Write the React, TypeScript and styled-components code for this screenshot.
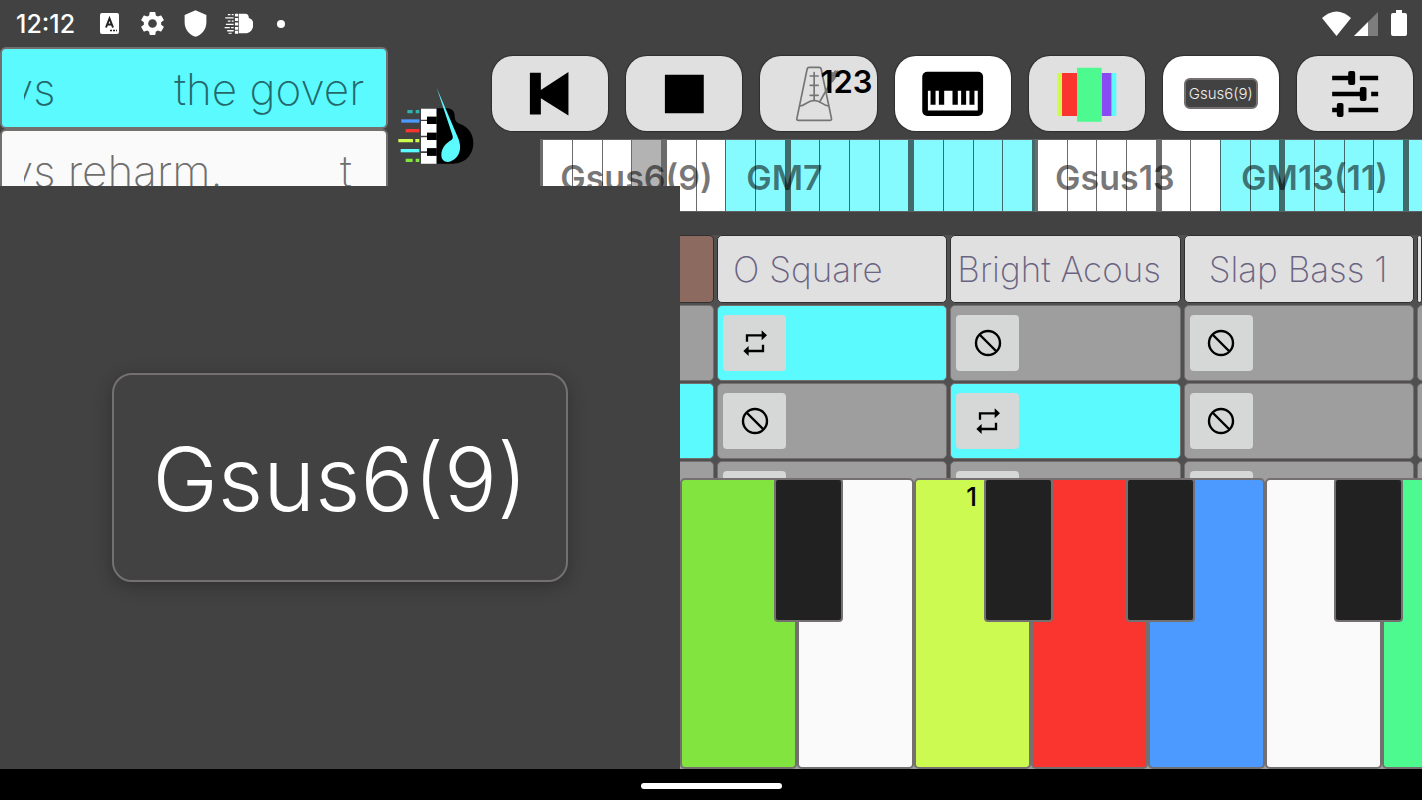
import React from "react";
import styled, { createGlobalStyle } from "styled-components";
import { MdSettings, MdShield } from "react-icons/md";

const bg = "#424242";
const edge = "#757070";
const cyan = "#5afaff";

const Global = createGlobalStyle`
  *, *::before, *::after { box-sizing: border-box; }
  body { margin: 0; background: ${bg}; }
  button { font: inherit; color: inherit; padding: 0; margin: 0; cursor: pointer; }
`;

const Page = styled.div`
  min-height: 100vh;
  display: flex;
  flex-direction: column;
  overflow: hidden;
  background: ${bg};
  font-family: Inter, "Liberation Sans", sans-serif;
`;

const StatusBar = styled.header`
  height: 47px;
  display: flex;
  align-items: center;
  justify-content: space-between;
  padding: 0 15px 0 16px;
  color: #fff;
`;

const StatusGroup = styled.div<{ $gap: number }>`
  display: flex;
  align-items: center;
  gap: ${(p) => p.$gap}px;
  svg { display: block; }
`;

const Clock = styled.time`
  flex: 0 0 65px;
  font-size: 25px;
  line-height: 28px;
  font-weight: 500;
`;

const Stage = styled.main`
  position: relative;
  flex: 1;
  display: flex;
  flex-direction: column;
`;

const Top = styled.div`
  height: 165px;
  display: flex;
  align-items: flex-start;
`;

const SongList = styled.div`
  flex: 0 0 27.3%;
  height: 139px;
  overflow: hidden;
`;

const Song = styled.button<{ $active?: boolean }>`
  display: flex;
  width: 100%;
  height: 82px;
  padding: 0 22px;
  border: 2px solid ${edge};
  border-radius: 6px;
  background: ${(p) => (p.$active ? cyan : "#fafafa")};
  color: ${(p) => (p.$active ? "#24686a" : "#6e6e6e")};
  font-size: 44px;
  font-weight: 200;
  line-height: 80px;
  text-align: left;
`;

const Marquee = styled.span`
  flex: 1;
  display: flex;
  justify-content: space-between;
  overflow: hidden;
  white-space: pre;
`;

const Leaving = styled.span`
  margin-left: -15px;
`;

const LogoBox = styled.div`
  flex: 0 0 104px;
  padding: 39px 0 0 9px;
  svg { display: block; }
`;

const TopRight = styled.div`
  flex: 1;
  min-width: 0;
`;

const Toolbar = styled.div`
  display: grid;
  grid-template-columns: repeat(7, 1fr);
  gap: 18px;
  height: 92px;
  padding: 9px 9px 8px 0;
`;

const Tool = styled.button<{ $on?: boolean }>`
  position: relative;
  display: flex;
  align-items: center;
  justify-content: center;
  border: 0;
  border-radius: 21px;
  background: ${(p) => (p.$on ? "#fff" : "#e0e0e0")};
  box-shadow: 0 0 1px 1px rgba(0, 0, 0, 0.3);
  svg { display: block; width: 116px; height: 75px; flex: none; }
`;

const Count = styled.span`
  position: absolute;
  top: 9px;
  right: 4px;
  font-size: 31px;
  line-height: 34px;
  font-weight: 600;
  color: #000;
`;

const MiniChord = styled.span`
  padding: 0 3px;
  border: 2px solid ${edge};
  border-radius: 6px;
  background: ${bg};
  color: #eee;
  font-size: 15px;
  line-height: 27px;
  font-weight: 300;
`;

const Timeline = styled.div`
  display: flex;
  height: 73px;
  margin-left: 48px;
  overflow: hidden;
`;

const Measure = styled.div`
  flex: 0 0 14.03%;
  display: flex;
`;

const Beat = styled.div<{ $tone: "white" | "cyan" | "grey"; $first: boolean; $last: boolean }>`
  position: relative;
  flex: 1;
  border-top: 1px solid #606060;
  border-bottom: 1px solid #606060;
  border-left: ${(p) => (p.$first ? "3px" : "1px")} solid ${(p) => (p.$tone === "cyan" ? "#416a6b" : "#6b6b6b")};
  border-right: ${(p) => (p.$last ? "3px" : "0")} solid ${(p) => (p.$tone === "cyan" ? "#416a6b" : "#6b6b6b")};
  background: ${(p) => ({ white: "#fff", cyan: "#86fbff", grey: "#b3b3b3" })[p.$tone]};
`;

const ChordName = styled.span<{ $inset: number }>`
  position: absolute;
  z-index: 1;
  left: ${(p) => p.$inset}px;
  top: 18px;
  font-size: 34px;
  line-height: 40px;
  font-weight: 600;
  white-space: nowrap;
  color: rgba(0, 0, 0, 0.54);
`;

const Right = styled.section`
  flex: 1;
  margin-left: 47.82%;
  display: flex;
  flex-direction: column;
`;

const Tracks = styled.div`
  height: 266px;
  padding-top: 23px;
  overflow: hidden;
`;

const TrackGrid = styled.div`
  display: grid;
  grid-template-columns: 34px repeat(3, 1fr) 5px;
  grid-auto-rows: 76px;
  grid-template-rows: 68px;
  gap: 2px 3px;
  background: #505050;
`;

const TrackName = styled.button<{ $inset?: number; $tone?: string }>`
  overflow: hidden;
  border: 1px solid #303030;
  border-left-width: ${(p) => (p.$tone ? 0 : 1)}px;
  border-radius: ${(p) => (p.$tone ? "0 5px 5px 0" : "5px")};
  padding-left: ${(p) => p.$inset ?? 0}px;
  background: ${(p) => p.$tone ?? "#e0e0e0"};
  color: #6a6482;
  font-size: 35px;
  line-height: 66px;
  font-weight: 200;
  text-align: left;
  white-space: nowrap;
`;

const Cell = styled.div<{ $on?: boolean; $cut?: boolean }>`
  overflow: hidden;
  border: 1px solid ${edge};
  border-left-width: ${(p) => (p.$cut ? 0 : 1)}px;
  border-radius: ${(p) => (p.$cut ? "0 5px 5px 0" : "5px")};
  padding: 9px 5px;
  background: ${(p) => (p.$on ? cyan : "#9e9e9e")};
`;

const Mode = styled.button`
  display: flex;
  align-items: center;
  justify-content: center;
  width: 63px;
  height: 56px;
  border: 0;
  border-radius: 4px;
  background: #d6d8d7;
  color: #000;
`;

const Keyboard = styled.div`
  flex: 1;
  min-height: 291px;
  display: flex;
  overflow: hidden;
  background: #9e9e9e;
`;

const KeySlot = styled.div`
  position: relative;
  flex: 0 0 15.77%;
  display: flex;
`;

const WhiteKey = styled.button<{ $tone: string }>`
  flex: 1;
  display: flex;
  justify-content: flex-end;
  padding: 3px 52px 0 0;
  border: 2px solid ${edge};
  border-radius: 5px;
  background: ${(p) => p.$tone};
  color: #000;
  font-size: 26px;
  line-height: 28px;
  font-weight: 500;
`;

const BlackKey = styled.button<{ $at: number }>`
  position: absolute;
  z-index: 1;
  top: 0;
  left: ${(p) => p.$at}%;
  width: 59%;
  height: 49.5%;
  border: 2px solid ${edge};
  border-radius: 4px;
  background: #212121;
`;

const ChordPanel = styled.section`
  position: absolute;
  z-index: 2;
  left: 0;
  top: 139px;
  bottom: 0;
  width: 47.82%;
  display: flex;
  align-items: center;
  justify-content: center;
  background: ${bg};
`;

const ChordCard = styled.div`
  width: 67%;
  height: 209px;
  display: flex;
  align-items: center;
  justify-content: center;
  padding-top: 2px;
  border: 2px solid ${edge};
  border-radius: 20px;
  box-shadow: 0 4px 18px rgba(0, 0, 0, 0.28);
  color: #fff;
  font-size: 88px;
  line-height: 104px;
  font-weight: 300;
`;

const NavBar = styled.footer`
  height: 31px;
  padding: 14px 0 0;
  display: flex;
  justify-content: center;
  background: #000;
`;

const HomePill = styled.button`
  width: 141px;
  height: 6px;
  border: 0;
  border-radius: 3px;
  background: #fff;
`;

const Logo = () => (
  <svg width="80" height="80" viewBox="20 20 240 240" aria-label="Piano logo">
    <path d="M140 87h30c14 0 23 9 23 21 0 14 3 21 18 27 24 9 38 30 38 56 0 36-26 62-60 62h-49z" fill="#000" />
    <path d="M92 88h46v24h-28v9H92zM92 125h18v9h28v26h-28v9H92zM92 174h18v8h28v25h-28v9H92zM92 221h18v8h28v24H92z" fill="#fff" />
    <path d="M110 112h29v22h-29zM110 160h29v22h-29zM110 207h29v22h-29z" fill="#000" />
    <path d="M51 92h16v10H51zM76 92h11v10H76z" fill="#2fb3b0" />
    <path d="M33 120h54v10H33z" fill="#4c99ff" />
    <path d="M46 149h41v10H46z" fill="#fa3530" />
    <path d="M24 179h44v10H24zM75 179h12v10H75z" fill="#cdfa50" />
    <path d="M31 209h56v10H31z" fill={cyan} />
    <path d="M46 238h21v10H46zM76 238h11v10H76z" fill="#82e53f" />
    <path d="M139 25 187 170c1 5 0 9-4 12-16 9-30 24-30 45 0 18 15 25 30 18 20-9 28-27 26-47-1-10-3-16-6-23z" fill={cyan} />
  </svg>
);

const RepeatIcon = () => (
  <svg width="26" height="28" viewBox="214 328 78 84" aria-hidden="true">
    <path d="M229 366V347h46M277 375v19h-46" fill="none" stroke="#000" strokeWidth="7" />
    <path d="M273 332l16 15-16 15zM234 379l-16 15 16 15z" fill="#000" />
  </svg>
);

const OffIcon = () => (
  <svg width="28" height="28" viewBox="0 0 28 28" aria-hidden="true" fill="none" stroke="#000" strokeWidth="2.4">
    <circle cx="14" cy="14" r="12" />
    <path d="M5.500 5.500l17 17" />
  </svg>
);

const MetronomeIcon = () => (
  <svg viewBox="18 16 347 225" aria-hidden="true" fill="none" stroke="#757575" strokeWidth="5" strokeLinecap="round">
    <path d="M165 50h30q5 0 6 5l31 149q1 5-5 5h-94q-6 0-5-5l31-149q1-5 6-5z" />
    <path d="M180 66v84M168 76h24M168 104h24M168 134h24M137 166c16-1 22-16 43-17 20 1 27 16 43 17M198 151l34-60M238 74l5-13" />
    <path d="M230 67l-3 23 8 4 14-20 1-14-10 6z" fill="#757575" strokeWidth="3" />
  </svg>
);

const PianoIcon = () => (
  <svg viewBox="420 16 349 225" aria-hidden="true">
    <rect x="502" y="63" width="183" height="133" rx="15" />
    <path d="M519 120h150v60H519z" fill="#fff" />
    <path d="M527 118h15v44h-15zM552 118h16v44h-16zM593 118h16v44h-16zM619 118h15v44h-15zM644 118h15v44h-15z" />
  </svg>
);

const ColorsIcon = () => (
  <svg viewBox="261 46 348 225" aria-hidden="true">
    <path d="M346 97h14v129h-14z" fill="#cdfa50" />
    <path d="M360 97h45v129h-45z" fill="#fa3530" />
    <path d="M479 97h30v129h-30z" fill="#8a4af3" />
    <path d="M509 97h14v129h-14z" fill={cyan} />
    <path d="M405 81h74v162h-74z" fill="#4dfa90" />
  </svg>
);

const SlidersIcon = () => (
  <svg viewBox="1065 46 347 225" aria-hidden="true">
    <path d="M1170 105h50v14h-50zM1253 105h55v14h-55zM1170 153h85v14h-85zM1287 153h21v14h-21zM1170 201h16v14h-16zM1219 201h89v14h-89z" />
    <rect x="1218" y="91" width="21" height="42" rx="6" />
    <rect x="1253" y="139" width="20" height="42" rx="6" />
    <rect x="1184" y="187" width="20" height="42" rx="6" />
  </svg>
);

type Tone = "white" | "cyan" | "grey";
const w: Tone = "white";
const c: Tone = "cyan";
const measures: Tone[][] = [
  [w, w, w, "grey"],
  [w, w, c, c],
  [c, c, c, c],
  [c, c, c, c],
  [w, w, w, w],
  [w, w, c, c],
  [c, c, c, c],
  [c, c, c, c],
];
const chordStarts: Record<string, { name: string; inset: number }> = {
  "0-0": { name: "Gsus6(9)", inset: 17 },
  "1-2": { name: "GM7", inset: 20 },
  "4-0": { name: "Gsus13", inset: 17 },
  "5-2": { name: "GM13(11)", inset: 20 },
};

const trackNames = [
  { name: "O Square", inset: 15 },
  { name: "Bright Acous", inset: 6 },
  { name: "Slap Bass 1", inset: 24 },
];
const rows = [
  { edge: false, cells: [true, false, false] },
  { edge: true, cells: [false, true, false] },
  { edge: false, cells: [false, false, false] },
];

const keys: { tone: string; label?: string; black?: number }[] = [
  { tone: "#82e53f", black: 80 },
  { tone: "#fafafa" },
  { tone: "#cdfa50", label: "1", black: 60 },
  { tone: "#fa3530", black: 81 },
  { tone: "#4c99ff" },
  { tone: "#fafafa", black: 59 },
  { tone: "#4dfa90" },
];

export default function App() {
  return (
    <Page>
      <Global />
      <StatusBar>
        <StatusGroup $gap={14}>
          <Clock>12:12</Clock>
          <svg width="29" height="22" viewBox="-4 0 29 22" aria-hidden="true">
            <rect x="1" y="0" width="19" height="21" rx="2" fill="#fff" />
            <path d="M7 14.500 10.500 5.500 14 14.500M8 11.500h5" fill="none" stroke="#222" strokeWidth="2" />
            <path d="M11 17.500h2M14 17.500h2M17 17.500h1" stroke="#222" strokeWidth="1.500" />
          </svg>
          <MdSettings size={29} />
          <MdShield size={29} />
          <svg width="29" height="24" viewBox="0 0 90 72" aria-hidden="true" fill="#fff">
            <path d="M46 4h20c8 0 11 6 11 13 12 3 14 13 14 20 0 16-10 28-24 28H46z" />
            <path d="M34 4h10v9H34zM34 17h10v10H34zM34 31h10v10H34zM34 45h10v9H34zM34 57h10v9H34z" />
            <path d="M12 5h8v4h-8zM24 5h6v4h-6zM4 15h26v4H4zM12 25h8v4h-8zM24 25h6v4h-6zM6 35h24v4H6zM2 45h16v4H2zM22 45h8v4h-8zM10 55h20v4H10zM14 63h10v3H14z" />
          </svg>
          <svg width="29" height="10" viewBox="0 0 29 10" aria-hidden="true">
            <circle cx="14" cy="5" r="4" fill="#fff" />
          </svg>
        </StatusGroup>
        <StatusGroup $gap={3}>
          <svg width="29" height="26" viewBox="0 0 29 26" aria-label="Wi-Fi">
            <path d="M0 7Q14.500-6 29 7L14.500 25z" fill="#fff" />
          </svg>
          <svg width="34" height="26" viewBox="0 0 34 26" aria-label="Signal">
            <path d="M24 1v24H0z" fill="#7d7d7d" />
            <path d="M14 11v14H0z" fill="#fff" />
          </svg>
          <svg width="16" height="27" viewBox="0 0 16 27" aria-label="Battery">
            <path d="M5 0h6v3h3q2 0 2 2v19q0 2-2 2H2q-2 0-2-2V5q0-2 2-2h3z" fill="#fff" />
          </svg>
        </StatusGroup>
      </StatusBar>

      <Stage>
        <Top>
          <SongList>
            <Song $active>
              <Marquee>
                <Leaving>ys</Leaving>
                <span>the gover</span>
              </Marquee>
            </Song>
            <Song>
              <Marquee>
                <Leaving>ys reharm.</Leaving>
                <span>t </span>
              </Marquee>
            </Song>
          </SongList>
          <LogoBox>
            <Logo />
          </LogoBox>
          <TopRight>
            <Toolbar>
              <Tool aria-label="Back to start">
                <svg viewBox="34 46 349 225" aria-hidden="true">
                  <path d="M148 96h33v52l83-54v131l-83-52v49h-33z" />
                </svg>
              </Tool>
              <Tool aria-label="Stop">
                <svg viewBox="438 46 349 225" aria-hidden="true">
                  <path d="M555 102h117v116H555z" />
                </svg>
              </Tool>
              <Tool aria-label="Metronome">
                <MetronomeIcon />
                <Count>123</Count>
              </Tool>
              <Tool $on aria-label="Keyboard">
                <PianoIcon />
              </Tool>
              <Tool aria-label="Colors">
                <ColorsIcon />
              </Tool>
              <Tool $on>
                <MiniChord>Gsus6(9)</MiniChord>
              </Tool>
              <Tool aria-label="Settings">
                <SlidersIcon />
              </Tool>
            </Toolbar>
            <Timeline>
              {measures.map((beats, m) => (
                <Measure key={m}>
                  {beats.map((tone, b) => {
                    const chord = chordStarts[`${m}-${b}`];
                    return (
                      <Beat key={b} $tone={tone} $first={b === 0} $last={b === 3}>
                        {chord && <ChordName $inset={chord.inset}>{chord.name}</ChordName>}
                      </Beat>
                    );
                  })}
                </Measure>
              ))}
            </Timeline>
          </TopRight>
        </Top>

        <Right>
          <Tracks>
            <TrackGrid>
              <TrackName $tone="#8d6a60" aria-label="Previous track" />
              {trackNames.map((t) => (
                <TrackName key={t.name} $inset={t.inset}>
                  {t.name}
                </TrackName>
              ))}
              <TrackName aria-label="Next track" />
              {rows.map((row, r) => (
                <React.Fragment key={r}>
                  <Cell $on={row.edge} $cut />
                  {row.cells.map((on, i) => (
                    <Cell key={i} $on={on}>
                      <Mode aria-label={on ? "Loop" : "Off"}>{on ? <RepeatIcon /> : <OffIcon />}</Mode>
                    </Cell>
                  ))}
                  <Cell />
                </React.Fragment>
              ))}
            </TrackGrid>
          </Tracks>
          <Keyboard>
            {keys.map((k, i) => (
              <KeySlot key={i}>
                <WhiteKey $tone={k.tone} aria-label={`White key ${i + 1}`}>
                  {k.label}
                </WhiteKey>
                {k.black !== undefined && <BlackKey $at={k.black} aria-label={`Black key ${i + 1}`} />}
              </KeySlot>
            ))}
          </Keyboard>
        </Right>

        <ChordPanel>
          <ChordCard>Gsus6(9)</ChordCard>
        </ChordPanel>
      </Stage>

      <NavBar>
        <HomePill aria-label="Home" />
      </NavBar>
    </Page>
  );
}
